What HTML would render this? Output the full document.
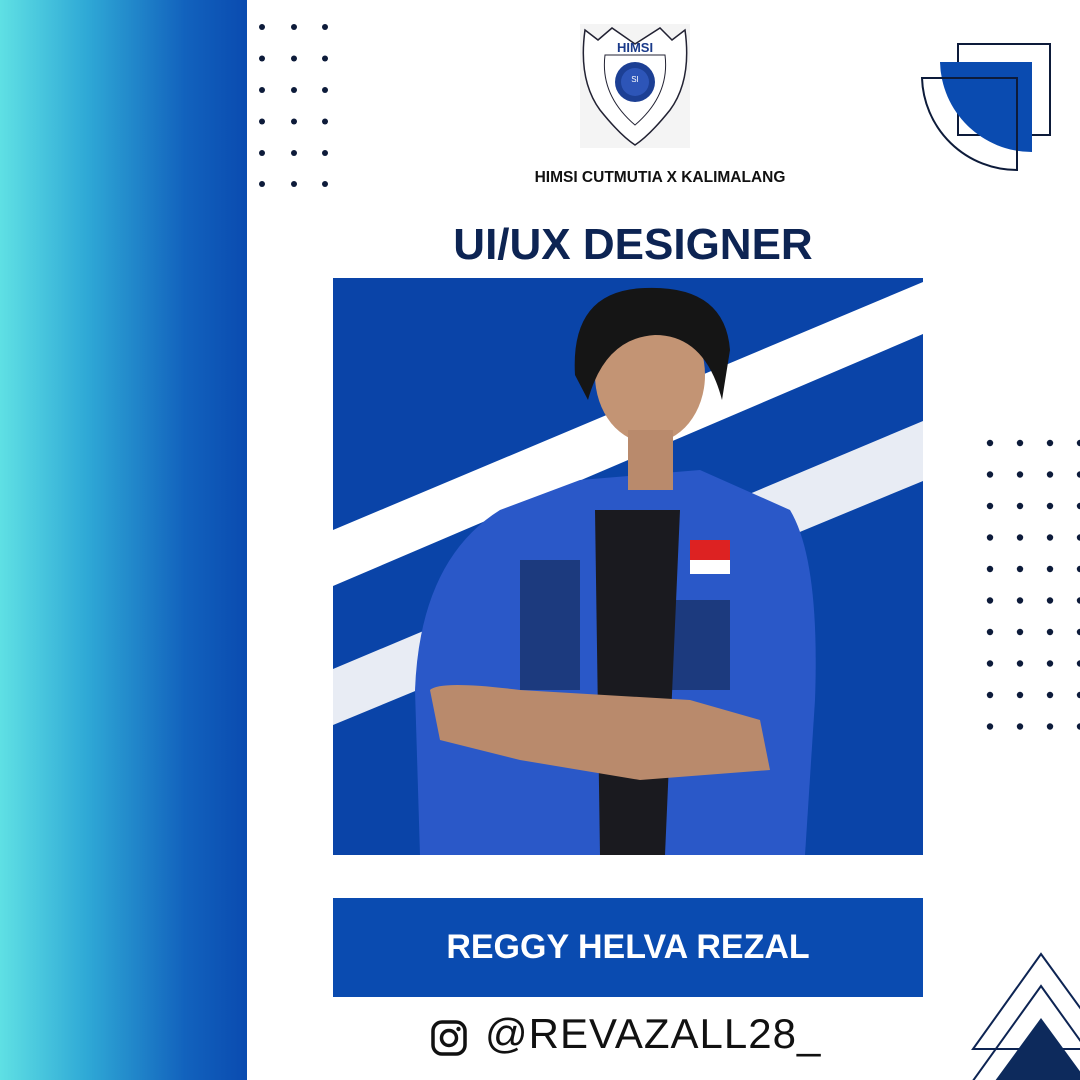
<!DOCTYPE html>
<html><head><meta charset="utf-8"><style>
html,body{margin:0;padding:0}
body{width:1080px;height:1080px;position:relative;background:#fff;overflow:hidden;font-family:"Liberation Sans",sans-serif}
.strip{position:absolute;left:0;top:0;width:247px;height:1080px;background:linear-gradient(90deg,#5fe0e4 0%,#2fa9d6 35%,#1262bd 75%,#0a4bb0 100%)}
.t{position:absolute;left:0;width:1080px;text-align:center;font-weight:bold;color:#0d2453}
</style></head><body>
<div class="strip"></div>
<svg width="1080" height="1080" style="position:absolute;left:0;top:0">
<g fill="#0d1b3a">
<g id="ld">
<circle cx="262" cy="27" r="3"/><circle cx="294" cy="27" r="3"/><circle cx="325" cy="27" r="3"/>
</g>
<use href="#ld" y="31.5"/><use href="#ld" y="63"/><use href="#ld" y="94.5"/><use href="#ld" y="126"/><use href="#ld" y="157"/>
<g id="rd"><circle cx="990" cy="443" r="3.2"/><circle cx="1020" cy="443" r="3.2"/><circle cx="1050" cy="443" r="3.2"/><circle cx="1080" cy="443" r="3.2"/></g>
<use href="#rd" y="31.5"/><use href="#rd" y="63"/><use href="#rd" y="94.5"/><use href="#rd" y="126"/><use href="#rd" y="157.5"/><use href="#rd" y="189"/><use href="#rd" y="220.5"/><use href="#rd" y="252"/><use href="#rd" y="283.5"/>
</g>
<rect x="958" y="44" width="92" height="91" fill="#fff" stroke="#0d1b3a" stroke-width="2"/>
<path d="M940 62 H1032 V152 A92 92 0 0 1 940 62Z" fill="#0a4bb0"/>
<path d="M922 78 H1017 V170 A95 95 0 0 1 922 78Z" fill="none" stroke="#0d1b3a" stroke-width="2"/>
<path d="M1041 954 L1110 1049 L973 1049Z" fill="none" stroke="#0d2453" stroke-width="2"/>
<path d="M1041 986 L1130 1110 L952 1110Z" fill="none" stroke="#0d2453" stroke-width="2"/>
<path d="M1041 1018 L1090 1085 L992 1085Z" fill="#0d2a5c"/>
<rect x="580" y="24" width="110" height="124" fill="#f4f4f4"/>
<path d="M585 30 L598 40 L612 28 L635 44 L660 28 L672 40 L685 30 Q692 80 670 110 Q650 135 635 145 Q620 135 600 110 Q578 80 585 30Z" fill="#fff" stroke="#223" stroke-width="1.5"/>
<path d="M605 55 H665 Q670 95 635 125 Q600 95 605 55Z" fill="none" stroke="#223" stroke-width="1"/>
<text x="635" y="52" font-size="13" font-weight="bold" text-anchor="middle" fill="#1a3a8a" font-family="Liberation Sans">HIMSI</text>
<circle cx="635" cy="82" r="20" fill="#1c3f94"/>
<circle cx="635" cy="82" r="14" fill="#2d55b8"/>
<text x="635" y="82" font-size="8" text-anchor="middle" fill="#fff">SI</text>
<rect x="333" y="278" width="590" height="577" fill="#0a44a8"/>
<polygon points="333,530 923,282 923,334 333,586" fill="#fff"/>
<polygon points="333,669 923,421 923,481 333,725" fill="#e8ecf4"/>
<path d="M420 855 L415 690 Q420 560 500 510 L580 480 L700 470 L790 510 Q820 560 815 700 L805 855Z" fill="#2a58c8"/>
<path d="M520 560 L580 560 L580 690 L520 690Z" fill="#1c3a7e"/>
<path d="M655 600 L730 600 L730 690 L655 690Z" fill="#1c3a7e"/>
<path d="M595 510 L680 510 L665 855 L600 855Z" fill="#1a1a1f"/>
<path d="M430 690 Q440 680 520 690 L690 700 L760 720 L770 770 L640 780 L520 760 L440 740Z" fill="#b98a6c"/>
<path d="M690 540 h40 v20 h-40z" fill="#d22"/><path d="M690 560 h40 v14 h-40z" fill="#fff"/>
<ellipse cx="650" cy="375" rx="55" ry="68" fill="#c39474"/>
<path d="M575 375 Q570 290 645 288 Q725 285 730 350 L722 400 Q705 335 655 335 Q605 338 588 400Z" fill="#151515"/>
<rect x="628" y="430" width="45" height="60" fill="#b98a6c"/>
<rect x="333" y="898" width="590" height="99" fill="#0a4bb0"/>
<rect x="433" y="1022" width="32" height="32" rx="9" fill="none" stroke="#111" stroke-width="3.5"/>
<circle cx="449" cy="1038" r="7.5" fill="none" stroke="#111" stroke-width="3.5"/>
<circle cx="458.5" cy="1029" r="2.2" fill="#111"/>
</svg>
<div class="t" style="top:169px;font-size:15.5px;color:#111;left:120px">HIMSI CUTMUTIA X KALIMALANG</div>
<div class="t" style="top:220px;font-size:44px;left:93px">UI/UX DESIGNER</div>
<div class="t" style="top:928px;font-size:34px;color:#fff;left:88px">REGGY HELVA REZAL</div>
<div style="position:absolute;left:485px;top:1010px;font-size:42px;color:#111;letter-spacing:1px">@REVAZALL28_</div>
</body></html>
